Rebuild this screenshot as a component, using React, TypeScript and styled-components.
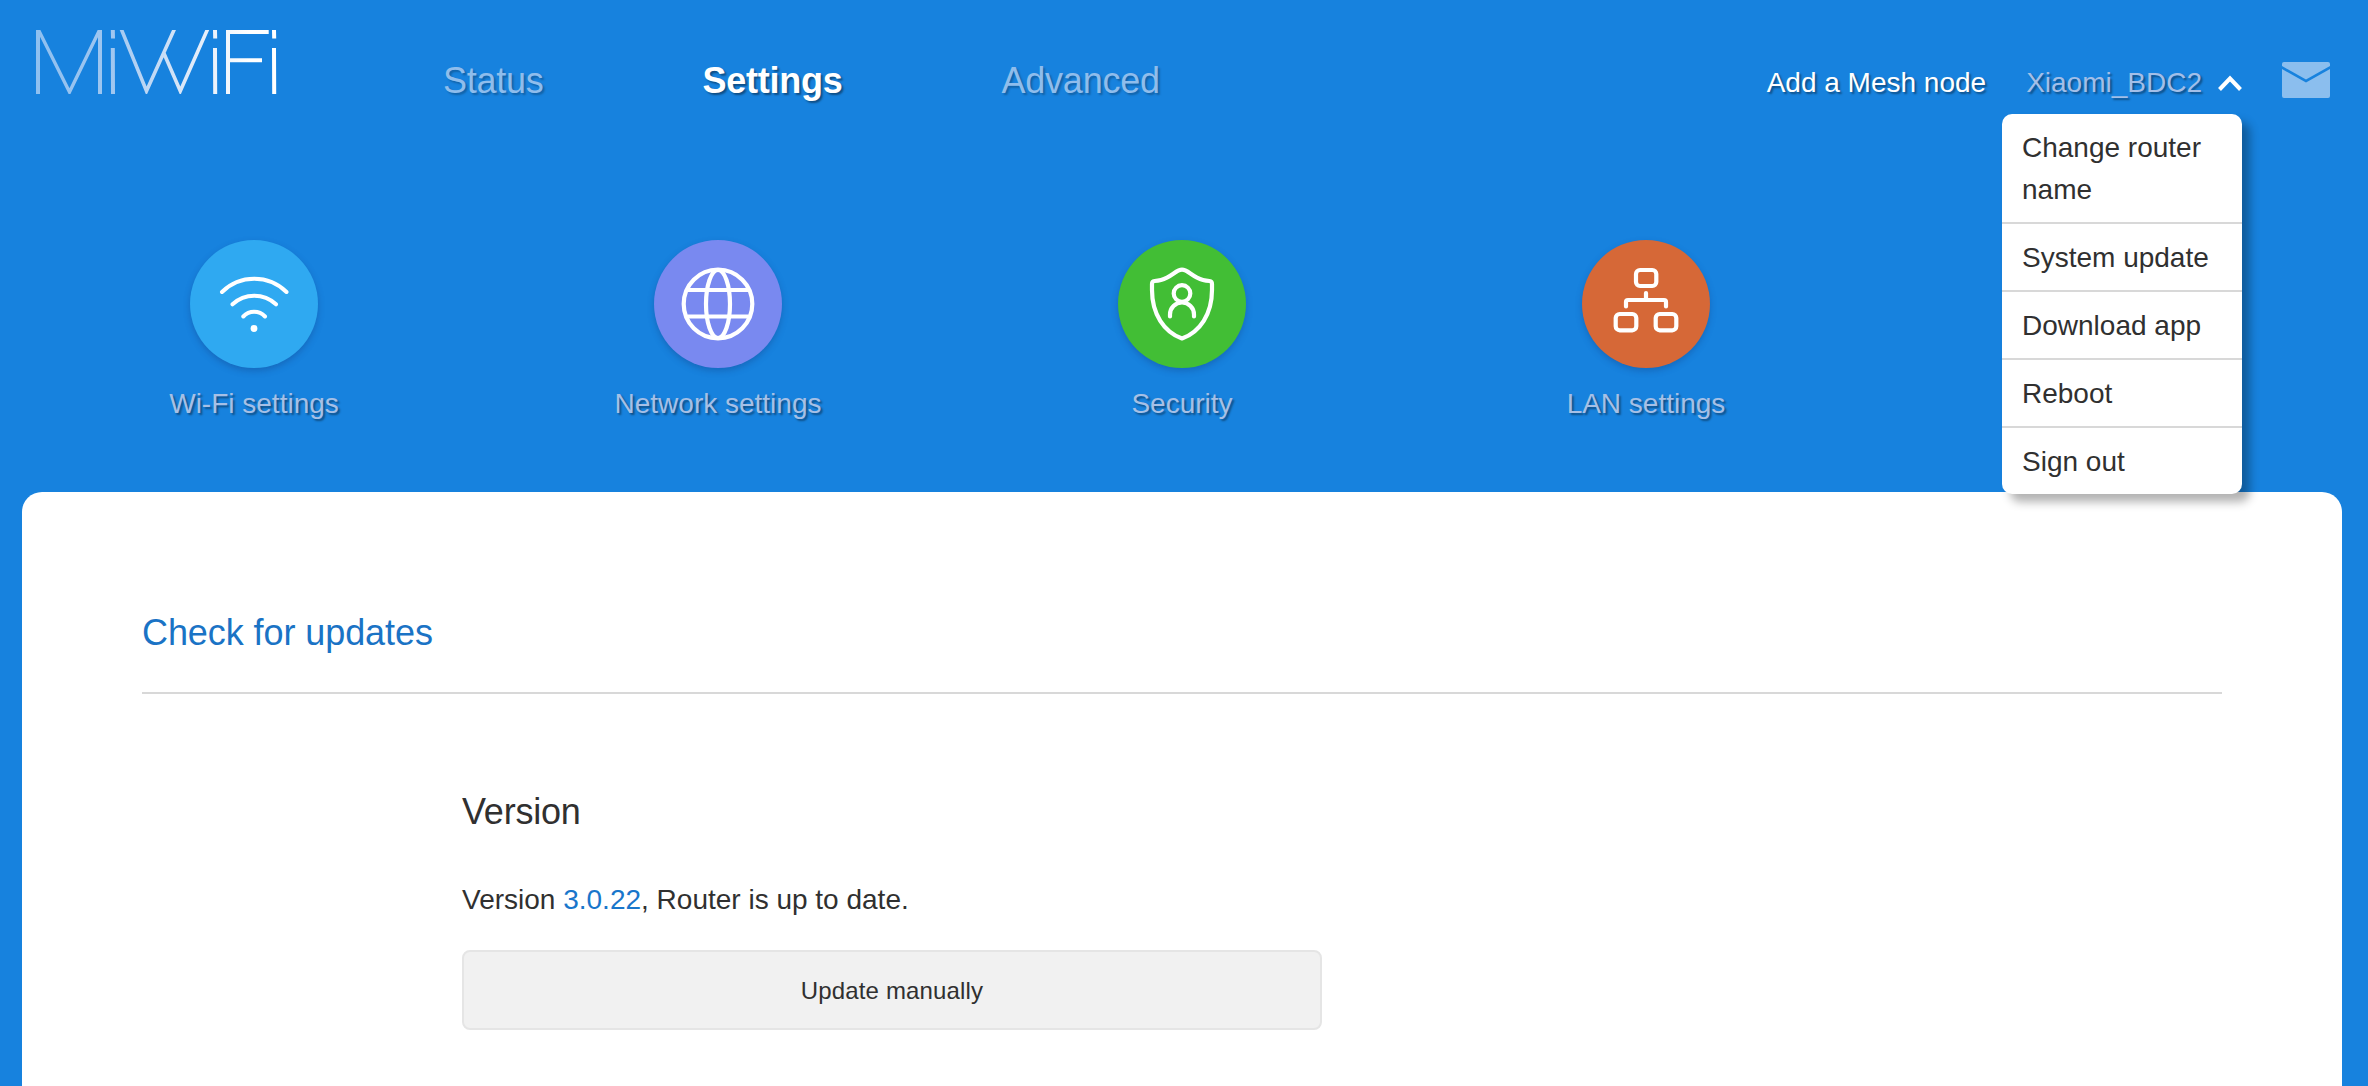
import React from "react";
import styled, { createGlobalStyle } from "styled-components";

const GlobalStyle = createGlobalStyle`
  * { box-sizing: border-box; }
  body {
    margin: 0;
    background: #1782de;
    font-family: "Liberation Sans", Arial, sans-serif;
    font-size: 28px;
    color: #303030;
  }
`;

const Page = styled.div`
  min-height: 1086px;
  height: 100vh;
  display: flex;
  flex-direction: column;
  overflow: hidden;
`;

const Header = styled.header`
  height: 160px;
  flex: none;
  display: flex;
  align-items: center;
  padding: 0 38px 0 35px;
`;

const LogoLink = styled.a`
  display: flex;
  width: 408px;
  margin-top: -36px;
`;

const Nav = styled.nav`
  display: flex;
  gap: 159px;
  padding-top: 2px;
`;

const NavLink = styled.a<{ $active?: boolean }>`
  font-size: 36px;
  line-height: 42px;
  letter-spacing: -0.25px;
  font-weight: ${(p) => (p.$active ? 700 : 400)};
  color: ${(p) => (p.$active ? "#fff" : "#8fbdec")};
  text-shadow: 2px 2px 2px rgba(0, 0, 0, ${(p) => (p.$active ? 0.4 : 0.25)});
`;

const Tools = styled.div`
  display: flex;
  align-items: center;
  margin-left: auto;
  padding-top: 6px;
`;

const MeshLink = styled.a`
  color: #fff;
  line-height: 42px;
  margin-right: 40px;
  text-shadow: 2px 2px 2px rgba(0, 0, 0, 0.4);
`;

const Account = styled.div`
  position: relative;
  display: flex;
  align-items: center;
  gap: 16px;
  margin-right: 40px;
  line-height: 42px;
`;

const RouterName = styled.span`
  color: #a3bfe8;
  text-shadow: 2px 2px 2px rgba(0, 0, 0, 0.4);
`;

const Menu = styled.ul`
  position: absolute;
  z-index: 2;
  top: 52px;
  right: 0;
  width: 240px;
  margin: 0;
  padding: 0;
  list-style: none;
  background: #fff;
  border-radius: 10px;
  box-shadow: 8px 8px 10px rgba(0, 0, 0, 0.3);
`;

const MenuItem = styled.li`
  padding: 13px 20px 11px;
  line-height: 42px;
  border-bottom: 2px solid #d8d8d8;
  &:last-child {
    border-bottom: 0;
  }
`;

const Shortcuts = styled.div`
  flex: none;
  height: 332px;
  padding: 80px 22px 0;
  display: grid;
  grid-template-columns: repeat(5, 464px);
`;

const Shortcut = styled.a`
  display: flex;
  flex-direction: column;
  align-items: center;
`;

const Disc = styled.span<{ $color: string }>`
  width: 128px;
  height: 128px;
  border-radius: 50%;
  background: ${(p) => p.$color};
  box-shadow: 0 3px 6px rgba(20, 60, 130, 0.35);
`;

const ShortcutLabel = styled.span`
  margin-top: 15px;
  line-height: 42px;
  color: #a6c0e6;
  text-shadow: 2px 2px 2px rgba(0, 0, 0, 0.4);
`;

const Card = styled.main`
  flex: 1;
  margin: 0 26px 0 22px;
  padding: 115px 120px 0;
  background: #fff;
  border-radius: 20px 20px 0 0;
`;

const Title = styled.h1`
  margin: 0;
  padding-bottom: 33px;
  border-bottom: 2px solid #d8d8d8;
  font-size: 36px;
  line-height: 52px;
  letter-spacing: -0.08px;
  font-weight: 400;
  color: #1a73c5;
`;

const Section = styled.section`
  width: 860px;
  margin: 91px 0 0 320px;
`;

const SectionTitle = styled.h2`
  margin: 0;
  font-size: 36px;
  line-height: 54px;
  letter-spacing: -0.2px;
  font-weight: 400;
`;

const VersionLine = styled.p`
  margin: 40px 0 29px;
  line-height: 42px;
`;

const VersionNumber = styled.span`
  color: #1976cb;
`;

const Button = styled.button`
  width: 100%;
  height: 80px;
  padding: 2px 0 0;
  border: 2px solid #e5e5e5;
  border-radius: 8px;
  background: #f1f1f1;
  color: #303030;
  font-family: inherit;
  font-size: 24px;
  letter-spacing: 0.15px;
`;

/* The slanted strokes run past the view box so that it trims them flat at cap height and baseline. */
const Logo = () => (
  <svg width="242" height="64" viewBox="35 30 242 64" fill="none" strokeWidth="4">
    <defs>
      <linearGradient id="logoFade" gradientUnits="userSpaceOnUse" x1="36" y1="0" x2="250" y2="0">
        <stop offset="0" stopColor="#8fc0f0" />
        <stop offset="0.35" stopColor="#9fc6f0" />
        <stop offset="0.7" stopColor="#dce8f8" />
        <stop offset="1" stopColor="#fff" />
      </linearGradient>
    </defs>
    <g stroke="url(#logoFade)">
      <path d="M38 94V30M100 94V30" />
      <path d="M36.5 26L69.5 92L101.5 26" strokeWidth="3.4" />
      <path d="M112.8 30L113 38.5M112.8 48L113 94" />
      <path d="M120 26L146.5 91L175.800 26M164 53.500L180.300 91L209 26" strokeWidth="3.6" />
      <path d="M215 30L215.2 38.5M215 48L215.2 94" />
      <path d="M268.700 32H228V94M228 60.300H262" />
      <path d="M274 30L274.2 38.5M274 48L274.2 94" />
    </g>
  </svg>
);

const Chevron = () => (
  <svg width="24" height="16" viewBox="0 0 24 16" fill="none" stroke="#fff" strokeWidth="4">
    <path d="M1.5 14.5L12 3.5L22.5 14.5" />
  </svg>
);

const MailIcon = styled.svg`
  display: block;
  margin-bottom: 6px;
`;

const Mail = () => (
  <MailIcon width="48" height="36" viewBox="0 0 48 36" fill="#8bbeee">
    <path d="M2 0H46Q48 0 48 2V4L24 17.5L0 4V2Q0 0 2 0Z" />
    <path d="M0 7L24 20.5L48 7V34Q48 36 46 36H2Q0 36 0 34Z" />
  </MailIcon>
);

const Glyph = ({ children }: { children: React.ReactNode }) => (
  <svg
    width="128"
    height="128"
    viewBox="0 0 128 128"
    fill="none"
    stroke="#fff"
    strokeWidth="4.2"
    strokeLinecap="round"
    strokeLinejoin="round"
  >
    {children}
  </svg>
);

const shortcuts = [
  {
    label: "Wi-Fi settings",
    color: "#2fa9f1",
    icon: (
      <>
        <path d="M32 52A46 46 0 0 1 96.5 52" strokeWidth="4" />
        <path d="M42.5 64.3A32 32 0 0 1 86 64.3" strokeWidth="4" />
        <path d="M53.3 76.5A15 15 0 0 1 75 76.5" strokeWidth="4" />
        <circle cx="64" cy="88.5" r="3.4" fill="#fff" stroke="none" />
      </>
    ),
  },
  {
    label: "Network settings",
    color: "#7989f0",
    icon: (
      <>
        <circle cx="64" cy="64" r="34.3" />
        <ellipse cx="64" cy="64" rx="12" ry="34" />
        <path d="M34 50H94M34 76.5H94" />
      </>
    ),
  },
  {
    label: "Security",
    color: "#42be35",
    icon: (
      <>
        <path d="M64 29.7C58 29.7 54 37 43 40Q40 40.8 36.5 41Q34 41.3 34 44V50C34 74 46 92 64 98.5C82 92 94 74 94 50V44Q94 41.3 91.5 41Q88 40.8 85 40C74 37 70 29.7 64 29.7Z" />
        <circle cx="64" cy="53.5" r="8.3" />
        <path d="M52 76.5V74.5A12 12 0 0 1 76 74.5V76.5" />
      </>
    ),
  },
  {
    label: "LAN settings",
    color: "#d66837",
    icon: (
      <>
        <rect x="54" y="30" width="20.300" height="16" rx="4" />
        <rect x="33.700" y="74" width="20.600" height="16.300" rx="4" />
        <rect x="73.700" y="74" width="20.600" height="16.300" rx="4" />
        <path d="M64 53V60M44 66.5V62Q44 60 46 60H82Q84 60 84 62V66.5" />
      </>
    ),
  },
];

const menuItems = ["Change router name", "System update", "Download app", "Reboot", "Sign out"];

export default function App() {
  return (
    <Page>
      <GlobalStyle />
      <Header>
        <LogoLink>
          <Logo />
        </LogoLink>
        <Nav>
          <NavLink>Status</NavLink>
          <NavLink $active>Settings</NavLink>
          <NavLink>Advanced</NavLink>
        </Nav>
        <Tools>
          <MeshLink>Add a Mesh node</MeshLink>
          <Account>
            <RouterName>Xiaomi_BDC2</RouterName>
            <Chevron />
            <Menu>
              {menuItems.map((item) => (
                <MenuItem key={item}>{item}</MenuItem>
              ))}
            </Menu>
          </Account>
          <Mail />
        </Tools>
      </Header>
      <Shortcuts>
        {shortcuts.map((s) => (
          <Shortcut key={s.label}>
            <Disc $color={s.color}>
              <Glyph>{s.icon}</Glyph>
            </Disc>
            <ShortcutLabel>{s.label}</ShortcutLabel>
          </Shortcut>
        ))}
      </Shortcuts>
      <Card>
        <Title>Check for updates</Title>
        <Section>
          <SectionTitle>Version</SectionTitle>
          <VersionLine>
            Version <VersionNumber>3.0.22</VersionNumber>, Router is up to date.
          </VersionLine>
          <Button>Update manually</Button>
        </Section>
      </Card>
    </Page>
  );
}
